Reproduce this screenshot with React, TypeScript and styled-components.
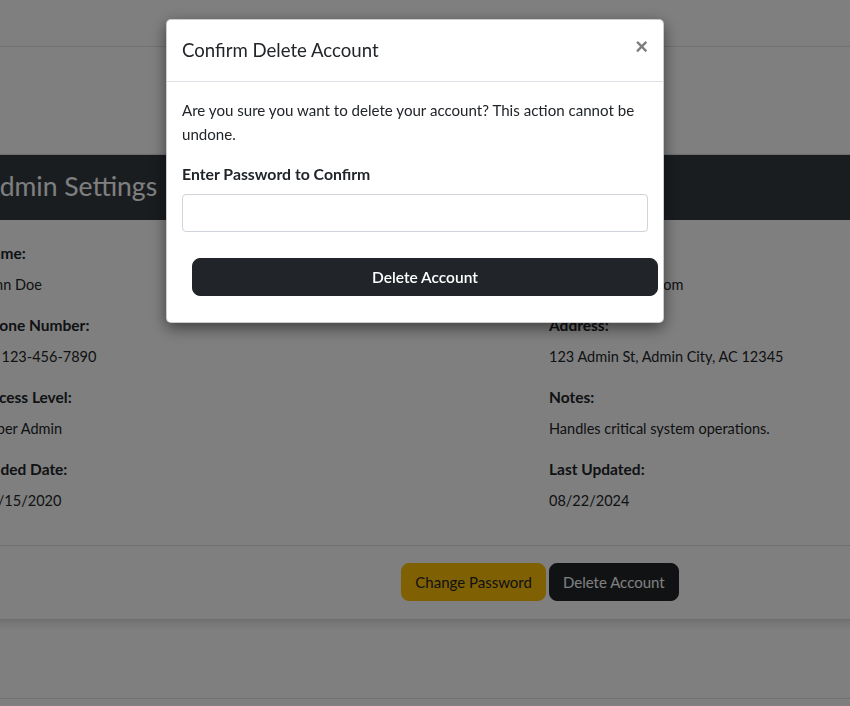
import React from "react";
import styled, { createGlobalStyle } from "styled-components";

const Global = createGlobalStyle`
  html, body { margin: 0; padding: 0; }
  body {
    font-family: Lato, "Noto Sans", "Liberation Sans", sans-serif;
    color: #212529;
    background: #fff;
    overflow: hidden;
    width: 850px;
    height: 706px;
  }
  * { box-sizing: border-box; }
`;

const Page = styled.div`
  display: flex;
  flex-direction: column;
  width: 850px;
`;

const TopBar = styled.header`
  height: 47px;
  border-bottom: 1px solid #dee2e6;
  background: #fff;
`;

const Main = styled.main`
  padding-top: 107px;
`;

const Card = styled.section`
  margin-left: -36px;
  width: 1152px;
  border: 1px solid rgba(0, 0, 0, 0.125);
  border-radius: 4px;
  background: #fff;
  box-shadow: 0 4px 8px rgba(0, 0, 0, 0.12);
`;

const CardHeader = styled.div`
  height: 65px;
  display: flex;
  align-items: center;
  padding: 0 20px 4px 17px;
  background: #343a40;
  color: #fff;
  border-radius: 3px 3px 0 0;
`;

const CardTitle = styled.h3`
  margin: 0;
  font-size: 26.5px;
  font-weight: 400;
  line-height: 32px;
`;

const CardBody = styled.div`
  padding: 21px 16px 16px;
`;

const Grid = styled.div`
  display: grid;
  grid-template-columns: 552px 1fr;
  column-gap: 16px;
`;

const Column = styled.div`
  display: flex;
  flex-direction: column;
`;

const FieldLabel = styled.div`
  font-weight: 700;
  font-size: 15.5px;
  line-height: 24px;
  margin-bottom: 8px;
`;

const FieldValue = styled.div`
  font-size: 14.5px;
  line-height: 24px;
  margin-bottom: 16px;
`;

const CardFooter = styled.div`
  border-top: 1px solid rgba(0, 0, 0, 0.125);
  padding: 17px 16px 18px;
  display: flex;
  justify-content: center;
  gap: 3px;
`;

const Button = styled.button<{ $variant: "warning" | "dark" }>`
  font-family: inherit;
  font-size: 15px;
  line-height: 24px;
  padding: 6px 13px;
  border-radius: 8px;
  border: 1px solid ${(p) => (p.$variant === "warning" ? "#ffc107" : "#212529")};
  background: ${(p) => (p.$variant === "warning" ? "#ffc107" : "#212529")};
  color: ${(p) => (p.$variant === "warning" ? "#212529" : "#fff")};
  cursor: pointer;
`;

const FooterBar = styled.footer`
  margin-top: 78px;
  border-top: 1px solid #dee2e6;
  height: 20px;
`;

const Backdrop = styled.div`
  position: fixed;
  inset: 0;
  background: rgba(0, 0, 0, 0.5);
`;

const Modal = styled.div`
  position: fixed;
  left: 166px;
  top: 19px;
  width: 498px;
  background: #fff;
  border-radius: 5px;
  border: 1px solid rgba(0, 0, 0, 0.2);
  box-shadow: 0 5px 15px rgba(0, 0, 0, 0.5);
  display: flex;
  flex-direction: column;
`;

const ModalHeader = styled.div`
  display: flex;
  align-items: center;
  justify-content: space-between;
  padding: 15px 15px 16px;
  border-bottom: 1px solid #dee2e6;
`;

const ModalTitle = styled.h5`
  margin: 0;
  font-size: 18.6px;
  font-weight: 400;
  line-height: 30px;
  color: #212529;
`;

const CloseButton = styled.button`
  border: 0;
  background: transparent;
  padding: 0;
  margin-top: -6px;
  font-family: "Liberation Sans", Arial, sans-serif;
  font-size: 22px;
  font-weight: 700;
  line-height: 24px;
  color: #000;
  opacity: 0.5;
  cursor: pointer;
`;

const ModalBody = styled.div`
  padding: 16px 15px 16px 15px;
`;

const Message = styled.p`
  margin: 0 0 16px;
  font-size: 15.1px;
  line-height: 24px;
  color: #212529;
`;

const Label = styled.label`
  display: block;
  font-weight: 700;
  font-size: 15.8px;
  line-height: 24px;
  margin-bottom: 8px;
`;

const Input = styled.input`
  display: block;
  width: 100%;
  height: 38px;
  border: 1px solid #ced4da;
  border-radius: 4px;
  padding: 6px 12px;
  font-family: inherit;
  font-size: 16px;
  margin-bottom: 26px;
`;

const WideButton = styled.button`
  display: block;
  width: 100%;
  margin: 0 0 10px 10px;
  height: 38px;
  border: 1px solid #212529;
  background: #212529;
  color: #fff;
  border-radius: 8px;
  font-family: inherit;
  font-size: 15.5px;
  font-weight: 600;
  cursor: pointer;
`;

const left = [
  ["Name:", "John Doe"],
  ["Phone Number:", "+1 123-456-7890"],
  ["Access Level:", "Super Admin"],
  ["Added Date:", "01/15/2020"],
];

const right = [
  ["Email:", "admin@example.com"],
  ["Address:", "123 Admin St, Admin City, AC 12345"],
  ["Notes:", "Handles critical system operations."],
  ["Last Updated:", "08/22/2024"],
];

function Fields({ items }: { items: string[][] }) {
  return (
    <Column>
      {items.map(([l, v]) => (
        <React.Fragment key={l}>
          <FieldLabel>{l}</FieldLabel>
          <FieldValue>{v}</FieldValue>
        </React.Fragment>
      ))}
    </Column>
  );
}

export default function App() {
  return (
    <>
      <Global />
      <Page>
        <TopBar />
        <Main>
          <Card>
            <CardHeader>
              <CardTitle>Admin Settings</CardTitle>
            </CardHeader>
            <CardBody>
              <Grid>
                <Fields items={left} />
                <Fields items={right} />
              </Grid>
            </CardBody>
            <CardFooter>
              <Button $variant="warning">Change Password</Button>
              <Button $variant="dark">Delete Account</Button>
            </CardFooter>
          </Card>
        </Main>
        <FooterBar />
      </Page>
      <Backdrop />
      <Modal role="dialog">
        <ModalHeader>
          <ModalTitle>Confirm Delete Account</ModalTitle>
          <CloseButton aria-label="Close">×</CloseButton>
        </ModalHeader>
        <ModalBody>
          <Message>
            Are you sure you want to delete your account? This action cannot be undone.
          </Message>
          <Label htmlFor="pw">Enter Password to Confirm</Label>
          <Input id="pw" type="password" />
          <WideButton>Delete Account</WideButton>
        </ModalBody>
      </Modal>
    </>
  );
}
